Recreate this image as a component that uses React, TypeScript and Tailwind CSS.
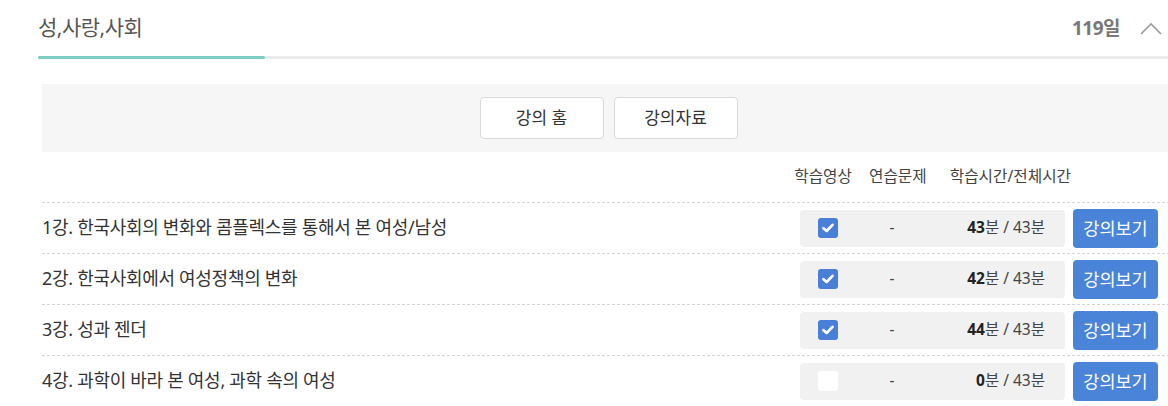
import { useState } from "react";

type Lecture = {
  title: string;
  watched: boolean;
  studied: number;
  total: number;
};

const lectures: Lecture[] = [
  { title: "1강. 한국사회의 변화와 콤플렉스를 통해서 본 여성/남성", watched: true, studied: 43, total: 43 },
  { title: "2강. 한국사회에서 여성정책의 변화", watched: true, studied: 42, total: 43 },
  { title: "3강. 성과 젠더", watched: true, studied: 44, total: 43 },
  { title: "4강. 과학이 바라 본 여성, 과학 속의 여성", watched: false, studied: 0, total: 43 },
];

function CheckBox({ checked }: { checked: boolean }) {
  if (!checked) {
    return <span className="block h-[20px] w-[20px] rounded-[3px] bg-white" />;
  }
  return (
    <span className="flex h-[20px] w-[20px] items-center justify-center rounded-[3px] bg-[#4a7fd8]">
      <svg width="12" height="10" viewBox="0 0 12 10" fill="none">
        <path d="M1.5 5.2 4.6 8 10.5 1.8" stroke="#fff" strokeWidth="2.6" strokeLinecap="round" strokeLinejoin="round" />
      </svg>
    </span>
  );
}

function LectureRow({ lecture }: { lecture: Lecture }) {
  return (
    <div className="flex h-[51px] items-center border-t border-dashed border-[#d4d4d4] pr-[17px]">
      <div className="flex-1 pb-[2px] text-[18px] leading-none text-[#333] tracking-[-0.3px]">{lecture.title}</div>
      <div className="flex h-[37px] w-[265px] items-center rounded-[4px] bg-[#f1f1f1] text-[15.5px] text-[#444]">
        <span className="ml-[18px]">
          <CheckBox checked={lecture.watched} />
        </span>
        <span className="w-[108px] text-center">-</span>
        <span className="flex-1 pr-[20px] text-right">
          <b className="font-bold text-[#222]">{lecture.studied}</b>분 / {lecture.total}분
        </span>
      </div>
      <button className="ml-[8px] h-[39px] w-[85px] rounded-[4px] bg-[#4a84d9] text-[17.5px] text-white">
        강의보기
      </button>
    </div>
  );
}

export default function App() {
  const [open] = useState(true);
  return (
    <div
      className="w-[1168px] overflow-hidden bg-white"
      style={{ fontFamily: '"Noto Sans", "Noto Sans CJK KR", sans-serif' }}
    >
      <div className="w-[1175px]">
        <div className="flex h-[56px] items-center justify-between pl-[38px]">
          <h2 className="text-[21px] font-normal text-[#555] tracking-[-0.5px]">성,사랑,사회</h2>
          <div className="flex items-center pr-[13px]">
            <span className="text-[19px] font-bold text-[#777] tracking-[-0.5px]">119일</span>
            <svg className="ml-[20px]" width="22" height="13" viewBox="0 0 22 13" fill="none">
              <path d={open ? "M1 12 11 2l10 10" : "M1 1l10 10L21 1"} stroke="#9a9a9a" strokeWidth="1.6" />
            </svg>
          </div>
        </div>
        <div className="ml-[38px] h-[3px] bg-[#ebebeb]">
          <div className="h-full w-[227px] rounded-full bg-[#7ecdc5]" />
        </div>

        <div className="pl-[42px]">
          <div className="mt-[25px] flex h-[68px] items-center justify-center gap-[10px] bg-[#f6f6f6]">
            <button className="h-[42px] w-[124px] rounded-[4px] border border-[#d9d9d9] bg-white text-[17px] text-[#333]">
              강의 홈
            </button>
            <button className="h-[42px] w-[124px] rounded-[4px] border border-[#d9d9d9] bg-white text-[17px] text-[#333]">
              강의자료
            </button>
          </div>

          <div className="flex h-[50px] items-center justify-end pr-[104px] text-[15.7px] text-[#444]">
            <span>학습영상</span>
            <span className="ml-[17px]">연습문제</span>
            <span className="ml-[23px]">학습시간/전체시간</span>
          </div>

          {lectures.map((l) => (
            <LectureRow key={l.title} lecture={l} />
          ))}
        </div>
      </div>
    </div>
  );
}
